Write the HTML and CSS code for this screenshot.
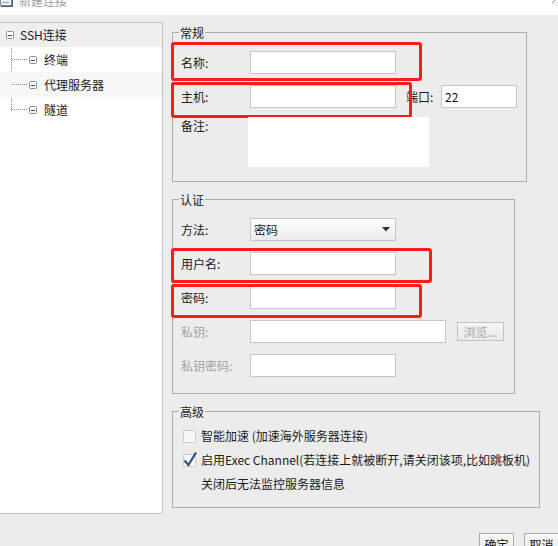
FILE: index.html
```html
<!DOCTYPE html>
<html lang="zh-CN">
<head>
<meta charset="utf-8">
<title>新建连接</title>
<link rel="stylesheet" href="styles.css">
</head>
<body>
<div class="window">
  <header class="titlebar">
    <svg class="app-icon" width="13" height="7" viewBox="0 0 13 7">
      <rect x="0.5" y="-6" width="11" height="11.5" fill="#eef1f4" stroke="#7d8b9a"/>
      <path d="M2 2.5h7" stroke="#9aa6b2"/>
      <path d="M1 6.5h12M12.5 0v7" stroke="#4d5b69"/>
    </svg>
    <span class="title">新建连接</span>
    <svg class="close" width="6" height="6" viewBox="0 0 6 6"><path d="M1 5L5 1" stroke="#8a8a8a"/></svg>
  </header>

  <div class="main">
    <nav class="tree">
      <div class="tree-row root">
        <svg class="toggle" width="8" height="8" viewBox="0 0 8 8"><rect x="0.5" y="0.5" width="7" height="7" rx="1" fill="#fff" stroke="#8e8e8e"/><path d="M2 4.5h4" stroke="#444"/></svg>
        <span>SSH连接</span>
      </div>
      <div class="children">
        <div class="tree-row child">
          <svg class="toggle" width="8" height="8" viewBox="0 0 8 8"><rect x="0.5" y="0.5" width="7" height="7" rx="1" fill="#fff" stroke="#8e8e8e"/><path d="M2 4.5h4" stroke="#444"/></svg>
          <span>终端</span>
        </div>
        <div class="tree-row child alt">
          <svg class="toggle" width="8" height="8" viewBox="0 0 8 8"><rect x="0.5" y="0.5" width="7" height="7" rx="1" fill="#fff" stroke="#8e8e8e"/><path d="M2 4.5h4" stroke="#444"/></svg>
          <span>代理服务器</span>
        </div>
        <div class="tree-row child">
          <svg class="toggle" width="8" height="8" viewBox="0 0 8 8"><rect x="0.5" y="0.5" width="7" height="7" rx="1" fill="#fff" stroke="#8e8e8e"/><path d="M2 4.5h4" stroke="#444"/></svg>
          <span>隧道</span>
        </div>
      </div>
    </nav>

    <div class="form">
      <section class="group general">
        <div class="legend">常规</div>
        <div class="rows">
          <div class="row mark m-name">
            <label class="lbl">名称:</label>
            <input class="field w146" type="text">
          </div>
          <div class="row mark m-host">
            <label class="lbl">主机:</label>
            <input class="field w146" type="text">
            <label class="lbl-port">端口:</label>
            <input class="field w76" type="text" value="22">
          </div>
          <div class="row row-note">
            <label class="lbl lbl-note">备注:</label>
            <textarea class="note-area"></textarea>
          </div>
        </div>
      </section>

      <section class="group auth">
        <div class="legend">认证</div>
        <div class="rows">
          <div class="row">
            <label class="lbl">方法:</label>
            <div class="select w146">
              <span>密码</span>
              <svg class="caret" width="8" height="5" viewBox="0 0 8 5"><path d="M0 0h8L4 4.5z" fill="#333"/></svg>
            </div>
          </div>
          <div class="row mark m-user">
            <label class="lbl">用户名:</label>
            <input class="field w146" type="text">
          </div>
          <div class="row mark m-pass">
            <label class="lbl">密码:</label>
            <input class="field w146" type="password">
          </div>
          <div class="row">
            <label class="lbl disabled">私钥:</label>
            <input class="field w196" type="text">
            <button class="browse" type="button">浏览...</button>
          </div>
          <div class="row">
            <label class="lbl disabled">私钥密码:</label>
            <input class="field w146" type="password">
          </div>
        </div>
      </section>

      <section class="group advanced">
        <div class="legend">高级</div>
        <div class="checks">
          <div class="check-row">
            <span class="cb"></span>
            <span class="check-text">智能加速 (加速海外服务器连接)</span>
          </div>
          <div class="check-row">
            <span class="cb checked">
              <svg width="15" height="16" viewBox="0 0 15 16"><path d="M1.5 9.5L5.5 14L13 1.5" fill="none" stroke="#34506c" stroke-width="2.2"/></svg>
            </span>
            <span class="check-text">启用Exec Channel(若连接上就被断开,请关闭该项,比如跳板机)</span>
          </div>
          <div class="check-row note-line">关闭后无法监控服务器信息</div>
        </div>
      </section>

      <div class="actions">
        <button class="btn" type="button">确定</button>
        <button class="btn" type="button">取消</button>
      </div>
    </div>
  </div>
</div>
</body>
</html>
```

FILE: styles.css
```css
* {
  box-sizing: border-box;
  margin: 0;
  padding: 0;
}

html,
body {
  width: 558px;
  height: 546px;
  overflow: hidden;
}

body {
  background: #ececec;
  font-family: "Noto Sans CJK SC", "Microsoft YaHei", sans-serif;
  font-size: 12px;
  line-height: 16px;
  color: #1b1b1b;
}

/* title bar */
.titlebar {
  height: 15px;
  background: #fff;
  display: flex;
  align-items: flex-start;
  overflow: hidden;
}

.app-icon {
  flex: none;
}

.title {
  margin: -5px 0 0 6px;
  line-height: 12px;
  color: #9c9c9c;
}

.close {
  margin-left: auto;
  margin-right: 1px;
  margin-top: -2px;
}

/* main area */
.main {
  display: flex;
  align-items: flex-start;
  margin-top: 7px;
}

.tree {
  flex: none;
  width: 163px;
  height: 492px;
  background: #fff;
  border: 1px solid #c3c3c3;
  border-left: none;
}

.tree-row {
  display: flex;
  align-items: center;
  white-space: nowrap;
}

.root {
  height: 24px;
  padding-left: 6px;
  gap: 6px;
  background: #efefef;
}

.children {
  position: relative;
}

.children::before {
  content: "";
  position: absolute;
  left: 11px;
  top: 1px;
  height: 63px;
  border-left: 1px dotted #8a8a8a;
}

.child {
  position: relative;
  height: 25px;
  padding-left: 29px;
  gap: 7px;
}

.child::before {
  content: "";
  position: absolute;
  left: 12px;
  top: 12px;
  width: 15px;
  border-top: 1px dotted #8a8a8a;
}

.child.alt {
  background: #f6f6f6;
}

.toggle {
  flex: none;
}

/* form column */
.form {
  flex: 1;
  margin-left: 9px;
  padding-top: 10px;
}

.group {
  border: 1px solid #adadad;
}

.general {
  width: 355px;
}

.auth {
  width: 343px;
  margin-top: 17px;
}

.advanced {
  width: 368px;
  margin-top: 17px;
}

.legend {
  width: fit-content;
  margin: -8px 0 0 6px;
  padding: 0 1px;
  line-height: 16px;
  background: #ececec;
}

.rows {
  display: flex;
  flex-direction: column;
  gap: 11px;
  padding: 10px 0 0 8px;
}

.general .rows {
  padding-bottom: 14px;
}

.auth .rows {
  padding-bottom: 16px;
}

.row {
  position: relative;
  display: flex;
  align-items: center;
  height: 23px;
}

.lbl {
  flex: none;
  width: 69px;
  white-space: nowrap;
}

.lbl.disabled {
  color: #a2a2a2;
}

.lbl-port {
  flex: none;
  width: 35px;
  margin-left: 10px;
}

.field {
  flex: none;
  height: 23px;
  border: 1px solid #c6c6c6;
  background: #fff;
  font: inherit;
  color: #111;
  padding: 0 3px;
  outline: none;
}

.w146 {
  width: 146px;
}

.w196 {
  width: 196px;
}

.w76 {
  width: 76px;
}

.row-note {
  height: auto;
  align-items: flex-start;
  margin-top: -2px;
}

.lbl-note {
  width: 67px;
  margin-top: 1px;
}

.note-area {
  width: 181px;
  height: 50px;
  border: none;
  background: #fff;
  resize: none;
  outline: none;
}

.select {
  flex: none;
  display: flex;
  align-items: center;
  justify-content: space-between;
  height: 23px;
  padding: 0 3px 0 3px;
  border: 1px solid #c6c6c6;
  background: linear-gradient(#ffffff, #ebebeb);
}

.caret {
  margin-right: 2px;
}

.browse {
  flex: none;
  width: 47px;
  height: 19px;
  margin-left: 11px;
  border: 1px solid #c2c2c2;
  background: linear-gradient(#f7f7f7, #e9e9e9);
  color: #a6a6a6;
  font: inherit;
  line-height: 16px;
}

/* red annotation boxes */
.mark::after {
  content: "";
  position: absolute;
  left: -10px;
  border: 3px solid #ff1c17;
  border-radius: 3px;
  pointer-events: none;
}

.m-name::after {
  top: -9px;
  width: 245px;
  height: 33px;
}

.m-host::after {
  top: -3px;
  width: 235px;
  height: 30px;
}

.m-user::after {
  top: -4px;
  width: 255px;
  height: 29px;
}

.m-pass::after {
  top: -2px;
  width: 245px;
  height: 28px;
}

/* advanced */
.checks {
  padding: 4px 0 11px 8px;
}

.check-row {
  display: flex;
  align-items: center;
  height: 24px;
  white-space: nowrap;
}

.cb {
  flex: none;
  position: relative;
  width: 13px;
  height: 13px;
  margin: 0 5px 0 2px;
  border: 1px solid #cdcdcd;
  background: #f7f7f7;
}

.cb svg {
  position: absolute;
  left: -1px;
  top: -4px;
}

.note-line {
  padding-left: 20px;
}

/* buttons */
.actions {
  display: flex;
  gap: 10px;
  margin: 25px 0 0 307px;
}

.btn {
  flex: none;
  width: 35px;
  height: 23px;
  border: 1px solid #adadad;
  background: linear-gradient(#f6f6f6, #e8e8e8);
  font: inherit;
  color: #111;
  line-height: 16px;
  padding: 0;
}
```
